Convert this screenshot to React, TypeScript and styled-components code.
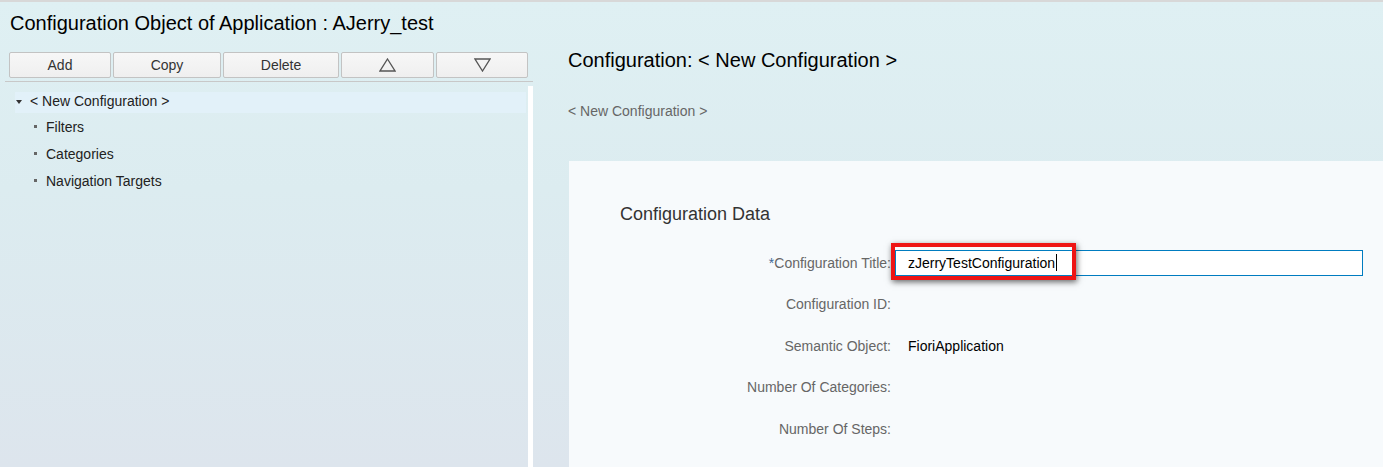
import React from 'react';
import styled, { createGlobalStyle } from 'styled-components';

const GlobalStyle = createGlobalStyle`
  html, body { margin: 0; padding: 0; }
  body { font-family: "Liberation Sans", Arial, sans-serif; }
  * { box-sizing: border-box; }
`;

const Page = styled.div`
  height: 467px;
  overflow: hidden;
  display: flex;
  border-top: 2px solid #d8d8d8;
  background: linear-gradient(to bottom, #dff0f3 0%, #dcecf0 40%, #dde5ed 100%);
`;

const LeftColumn = styled.div`
  width: 533px;
  flex: none;
  display: flex;
  flex-direction: column;
`;

const AppTitle = styled.h1`
  margin: 9px 0 0 10px;
  font-size: 20px;
  line-height: 24px;
  font-weight: normal;
  color: #000;
`;

const Toolbar = styled.div`
  display: flex;
  gap: 2px;
  margin: 17px 0 0 9px;
`;

const ToolButton = styled.button<{ $w: number }>`
  width: ${p => p.$w}px;
  height: 26px;
  padding: 0;
  display: flex;
  align-items: center;
  justify-content: center;
  border: 1px solid #c3c3c3;
  border-radius: 2px;
  background: linear-gradient(to bottom, #f7f7f7, #efefef);
  font-family: "Liberation Sans", Arial, sans-serif;
  font-size: 14px;
  color: #333;
`;

const Separator = styled.div`
  margin: 3px 0 0 5px;
  width: 528px;
  height: 1px;
  background: #c8c8c8;
`;

const TreeArea = styled.div`
  flex: 1;
  display: flex;
  margin-top: 4px;
`;

const TreePane = styled.div`
  flex: 1;
  padding: 6px 2px 0 15px;
`;

const Splitter = styled.div`
  width: 5px;
  background: #fff;
`;

const TreeRow = styled.div<{ $selected?: boolean; $depth: number }>`
  display: flex;
  align-items: center;
  height: ${p => (p.$depth === 0 ? 21 : 27)}px;
  padding-left: ${p => (p.$depth === 0 ? 1 : 19)}px;
  padding-bottom: ${p => (p.$depth === 0 ? 3 : 0)}px;
  background: ${p => (p.$selected ? '#e2f1f9' : 'transparent')};
  font-size: 14px;
  color: #222;
`;

const Expander = styled.span`
  width: 0;
  height: 0;
  border-left: 3.5px solid transparent;
  border-right: 3.5px solid transparent;
  border-top: 4px solid #333;
  margin: 2px 8px 0 0;
`;

const Bullet = styled.span`
  width: 3px;
  height: 3px;
  background: #666;
  margin-right: 9px;
`;

const RightColumn = styled.div`
  flex: 1;
  display: flex;
  flex-direction: column;
  padding-top: 46px;
`;

const Heading = styled.h2`
  margin: 0 0 0 35px;
  font-size: 20px;
  line-height: 24px;
  font-weight: normal;
  color: #000;
`;

const Breadcrumb = styled.div`
  margin: 30px 0 0 35px;
  font-size: 14px;
  line-height: 18px;
  color: #666;
`;

const Card = styled.div`
  flex: 1;
  margin: 41px 0 0 36px;
  padding: 42px 0 0 51px;
  background: #f7fafc;
`;

const CardTitle = styled.h3`
  margin: 0;
  font-size: 18px;
  line-height: 22px;
  font-weight: normal;
  color: #333;
`;

const Form = styled.div`
  margin-top: 17px;
  display: grid;
  grid-template-columns: 271px 468px;
  column-gap: 4px;
  grid-auto-rows: 41.5px;
  align-items: center;
`;

const Label = styled.div`
  text-align: right;
  font-size: 14px;
  color: #666;
`;

const Required = styled.span`
  color: #3f6a98;
`;

const Value = styled.div`
  padding-left: 13px;
  font-size: 14px;
  color: #000;
`;

const TextField = styled.div`
  position: relative;
  height: 26px;
  display: flex;
  align-items: center;
  padding-left: 12px;
  border: 1px solid #007cc0;
  background: #fff;
  font-size: 14px;
  color: #000;
`;

const Caret = styled.span`
  display: inline-block;
  width: 1px;
  height: 17px;
  margin-left: 1px;
  background: #000;
`;

const Highlight = styled.div`
  position: absolute;
  left: -5px;
  top: -8px;
  width: 185px;
  height: 37px;
  border: 4px solid #ee1414;
  box-shadow: 1px 2px 6px rgba(0, 0, 0, 0.6);
  pointer-events: none;
`;

const TriangleIcon = ({ down }: { down?: boolean }) => (
  <svg width="17" height="14" viewBox="0 0 17 14">
    <polygon
      points={down ? '1,1 16,1 8.5,13' : '8.5,1 16,13 1,13'}
      fill="none"
      stroke="#555"
      strokeWidth="1.3"
    />
  </svg>
);

const buttons: { label: React.ReactNode; w: number }[] = [
  { label: 'Add', w: 102 },
  { label: 'Copy', w: 108 },
  { label: 'Delete', w: 116 },
  { label: <TriangleIcon />, w: 93 },
  { label: <TriangleIcon down />, w: 92 },
];

const children = ['Filters', 'Categories', 'Navigation Targets'];

export default function App() {
  return (
    <>
      <GlobalStyle />
      <Page>
        <LeftColumn>
          <AppTitle>Configuration Object of Application : AJerry_test</AppTitle>
          <Toolbar>
            {buttons.map((b, i) => (
              <ToolButton key={i} $w={b.w}>
                {b.label}
              </ToolButton>
            ))}
          </Toolbar>
          <Separator />
          <TreeArea>
            <TreePane>
              <TreeRow $depth={0} $selected>
                <Expander />
                {'< New Configuration >'}
              </TreeRow>
              {children.map(c => (
                <TreeRow key={c} $depth={1}>
                  <Bullet />
                  {c}
                </TreeRow>
              ))}
            </TreePane>
            <Splitter />
          </TreeArea>
        </LeftColumn>
        <RightColumn>
          <Heading>{'Configuration: < New Configuration >'}</Heading>
          <Breadcrumb>{'< New Configuration >'}</Breadcrumb>
          <Card>
            <CardTitle>Configuration Data</CardTitle>
            <Form>
              <Label>
                <Required>*</Required>Configuration Title:
              </Label>
              <TextField>
                zJerryTestConfiguration
                <Caret />
                <Highlight />
              </TextField>
              <Label>Configuration ID:</Label>
              <Value />
              <Label>Semantic Object:</Label>
              <Value>FioriApplication</Value>
              <Label>Number Of Categories:</Label>
              <Value />
              <Label>Number Of Steps:</Label>
              <Value />
            </Form>
          </Card>
        </RightColumn>
      </Page>
    </>
  );
}
